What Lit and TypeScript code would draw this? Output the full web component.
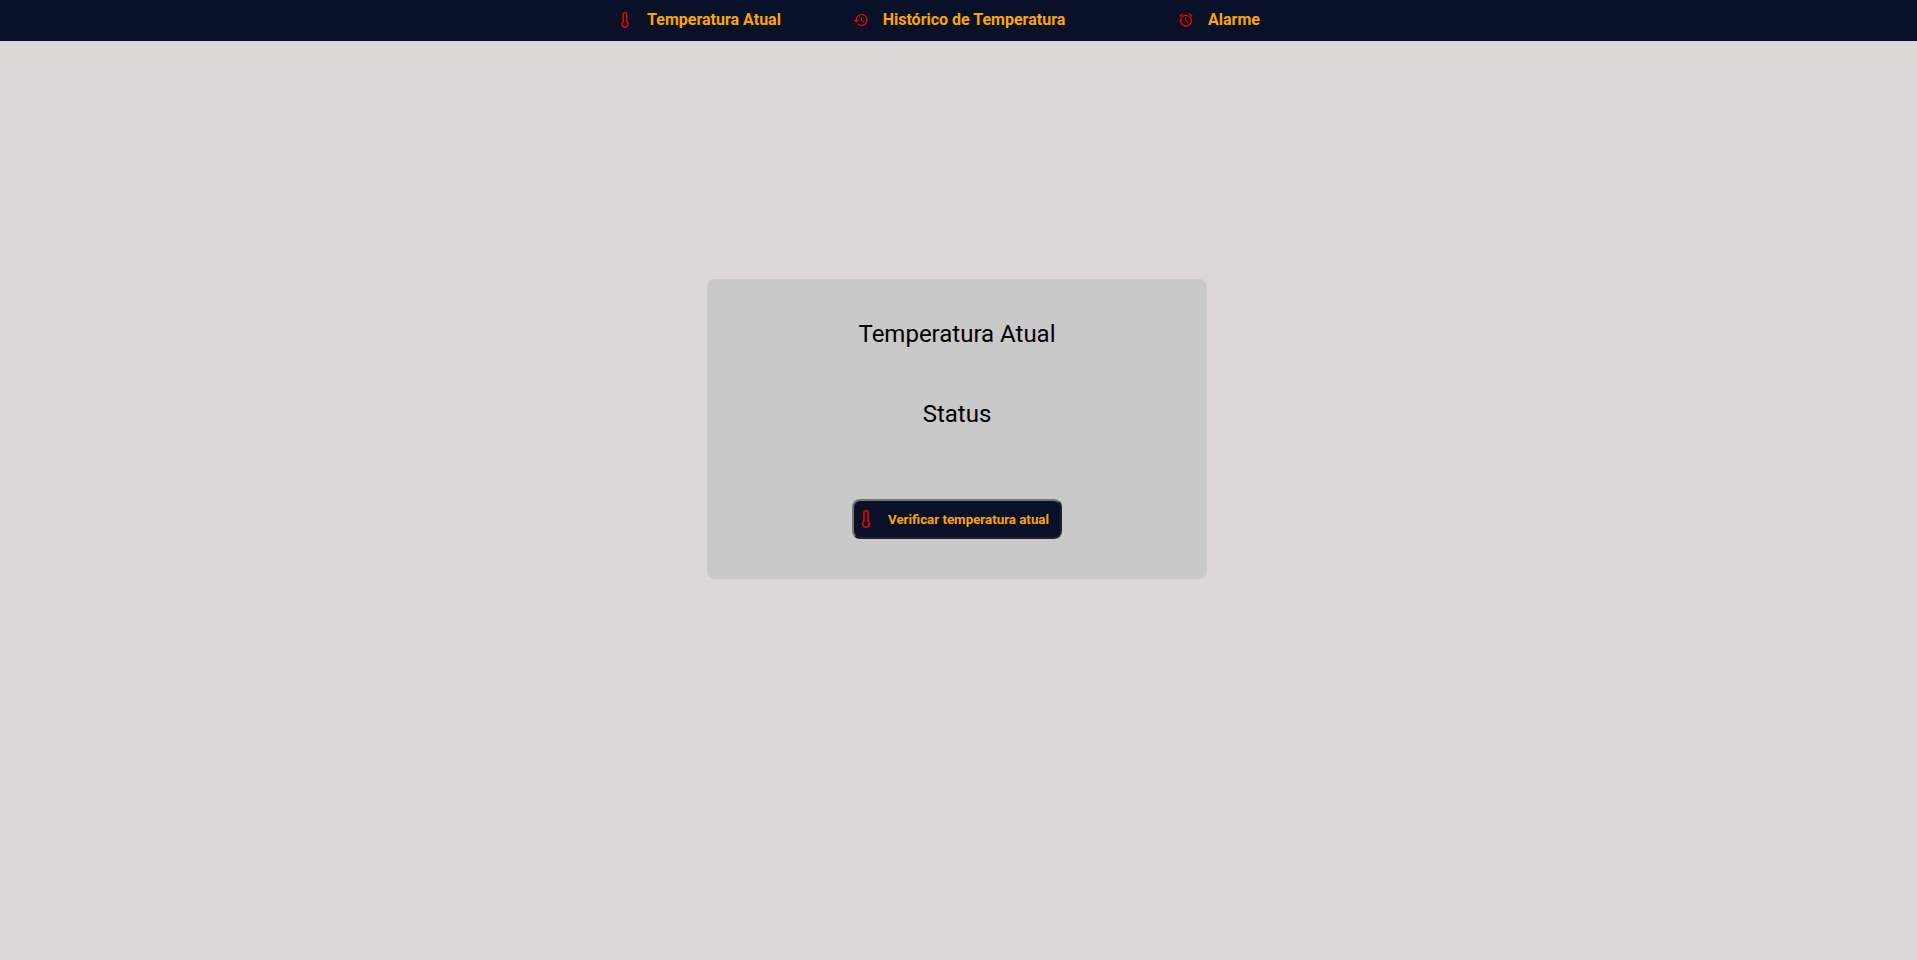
import { LitElement, html, css, svg } from "lit";
import { customElement } from "lit/decorators.js";

const thermometer = svg`<path fill="none" stroke="currentColor" stroke-width="2" d="M9.300 14.800V3.700a2.700 2.700 0 0 1 5.400 0v11.100a4.500 4.500 0 1 1-5.400 0z" />`;
const history = svg`<path fill="currentColor" d="M13 3a9 9 0 0 0-9 9H1l3.890 3.890.070.140L9 12H6c0-3.870 3.130-7 7-7s7 3.130 7 7-3.130 7-7 7c-1.930 0-3.680-.79-4.940-2.060l-1.420 1.420A8.954 8.954 0 0 0 13 21a9 9 0 0 0 0-18zm-1 5v5l4.280 2.540.720-1.210-3.500-2.080V8H12z" />`;
const alarm = svg`<path fill="currentColor" d="M22 5.720l-4.600-3.860-1.290 1.530 4.600 3.860L22 5.720zM7.880 3.390L6.600 1.860 2 5.710l1.290 1.530 4.590-3.850zM12.500 8H11v6l4.750 2.850.75-1.230-4-2.370V8zM12 4c-4.970 0-9 4.030-9 9s4.020 9 9 9a9 9 0 0 0 0-18zm0 16c-3.870 0-7-3.130-7-7s3.130-7 7-7 7 3.130 7 7-3.130 7-7 7z" />`;

const links = [
  { label: "Temperatura Atual", icon: thermometer },
  { label: "Histórico de Temperatura", icon: history },
  { label: "Alarme", icon: alarm },
];

@customElement("app-root")
export class AppRoot extends LitElement {
  static styles = css`
    :host {
      display: flex;
      flex-direction: column;
      min-height: 100vh;
      background: #dcd8d7;
      color: #000;
      font-family: Roboto, sans-serif;
    }
    .nav {
      display: grid;
      grid-template-columns: repeat(3, minmax(0, 260px));
      justify-content: center;
      background: #081128;
      padding: 8px 0 9px 1px;
    }
    .link {
      display: flex;
      align-items: center;
      justify-content: center;
      gap: 14px;
      color: #ffa500;
      font-size: 16px;
      font-weight: 700;
      line-height: 24px;
      text-decoration: none;
    }
    .icon {
      flex: none;
      width: 16px;
      height: 16px;
      color: #ff0000;
    }
    .main {
      display: flex;
      justify-content: center;
      padding: 238px 3px 0 0;
    }
    .card {
      box-sizing: border-box;
      width: 100%;
      max-width: 500px;
      display: flex;
      flex-direction: column;
      align-items: center;
      padding: 40px 20px;
      border-radius: 8px;
      background: #c9c9c9;
    }
    .title {
      margin: 0 0 50px;
      font-size: 24px;
      font-weight: 400;
      line-height: 30px;
    }
    .action {
      display: flex;
      align-items: center;
      gap: 12px;
      height: 40px;
      margin-top: 20px;
      padding: 0 11px 0 2px;
      border: 2px outset #767676;
      border-radius: 8px;
      background: #081128;
      color: #ffa500;
      font-family: inherit;
      font-weight: 700;
      cursor: pointer;
    }
    .action .icon {
      width: 20px;
      height: 18px;
    }
  `;

  render() {
    return html`
      <nav class="nav">
        ${links.map(
          (l) => html`<a class="link" href="#"
            ><svg class="icon" viewBox="0 0 24 24" aria-hidden="true">${l.icon}</svg>${l.label}</a
          >`
        )}
      </nav>
      <main class="main">
        <section class="card">
          <h1 class="title">Temperatura Atual</h1>
          <h2 class="title">Status</h2>
          <button class="action" type="button">
            <svg class="icon" viewBox="0 0 24 24" aria-hidden="true">${thermometer}</svg>
            Verificar temperatura atual
          </button>
        </section>
      </main>
    `;
  }
}
